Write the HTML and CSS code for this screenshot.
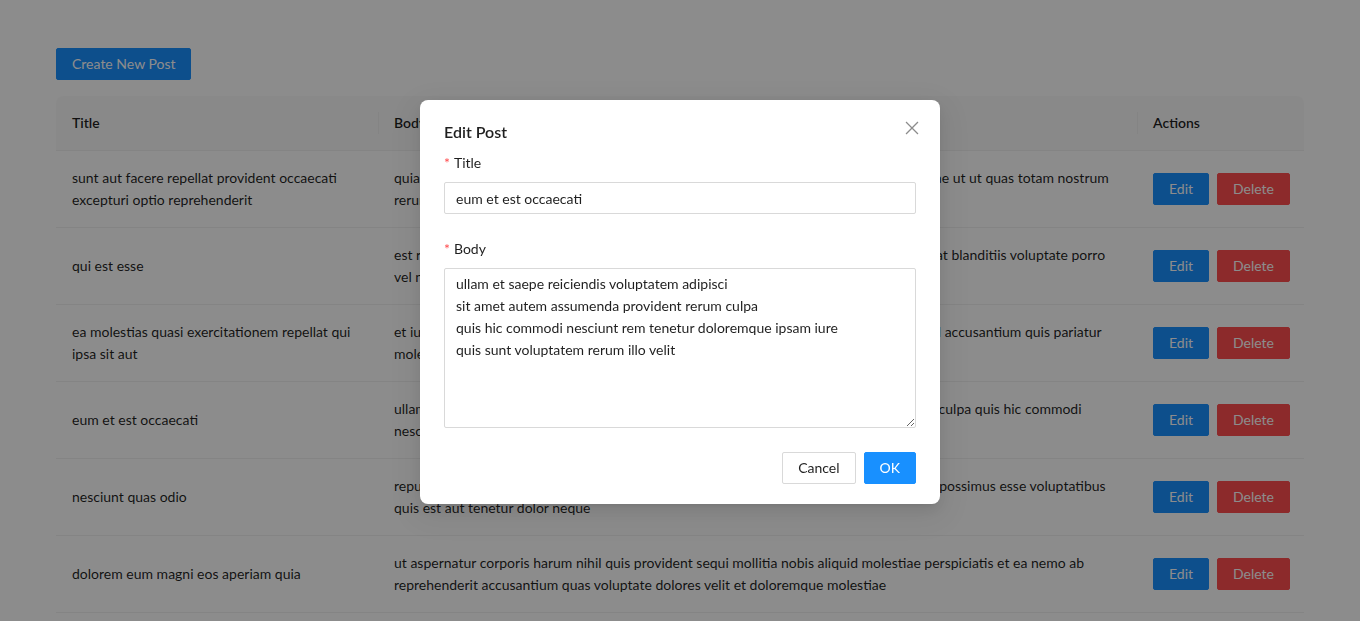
FILE: index.html
```html
<!DOCTYPE html>
<html lang="en">
<head>
<meta charset="utf-8">
<title>Posts</title>
<link rel="stylesheet" href="styles.css">
</head>
<body>
<div class="page">
  <button class="btn btn-primary create-btn">Create New Post</button>
  <table class="posts">
    <colgroup>
      <col class="col-title">
      <col class="col-body">
      <col class="col-actions">
    </colgroup>
    <thead>
      <tr><th>Title</th><th>Body</th><th>Actions</th></tr>
    </thead>
    <tbody>
      <tr>
        <td>sunt aut facere repellat provident occaecati excepturi optio reprehenderit</td>
        <td>quia et suscipit suscipit recusandae consequuntur expedita et cum reprehenderit molestiae ut ut quas totam nostrum rerum est autem sunt rem eveniet architecto</td>
        <td><div class="actions"><button class="btn btn-primary">Edit</button><button class="btn btn-danger">Delete</button></div></td>
      </tr>
      <tr>
        <td>qui est esse</td>
        <td>est rerum tempore vitae sequi sint nihil reprehenderit dolor beatae ea dolores neque fugiat blanditiis voluptate porro vel nihil molestiae ut reiciendis qui aperiam non debitis possimus qui neque nisi nulla</td>
        <td><div class="actions"><button class="btn btn-primary">Edit</button><button class="btn btn-danger">Delete</button></div></td>
      </tr>
      <tr>
        <td>ea molestias quasi exercitationem repellat qui ipsa sit aut</td>
        <td>et iusto sed quo iure voluptatem occaecati omnis eligendi aut ad voluptatem doloribus vel accusantium quis pariatur molestiae porro eius odio et labore et velit aut</td>
        <td><div class="actions"><button class="btn btn-primary">Edit</button><button class="btn btn-danger">Delete</button></div></td>
      </tr>
      <tr>
        <td>eum et est occaecati</td>
        <td>ullam et saepe reiciendis voluptatem adipisci sit amet autem assumenda provident rerum culpa quis hic commodi nesciunt rem tenetur doloremque ipsam iure quis sunt voluptatem rerum illo velit</td>
        <td><div class="actions"><button class="btn btn-primary">Edit</button><button class="btn btn-danger">Delete</button></div></td>
      </tr>
      <tr>
        <td>nesciunt quas odio</td>
        <td>repudiandae veniam quaerat sunt sed alias aut fugiat sit autem sed est voluptatem omnis possimus esse voluptatibus quis est aut tenetur dolor neque</td>
        <td><div class="actions"><button class="btn btn-primary">Edit</button><button class="btn btn-danger">Delete</button></div></td>
      </tr>
      <tr>
        <td>dolorem eum magni eos aperiam quia</td>
        <td>ut aspernatur corporis harum nihil quis provident sequi mollitia nobis aliquid molestiae perspiciatis et ea nemo ab reprehenderit accusantium quas voluptate dolores velit et doloremque molestiae</td>
        <td><div class="actions"><button class="btn btn-primary">Edit</button><button class="btn btn-danger">Delete</button></div></td>
      </tr>
    </tbody>
  </table>
</div>

<div class="mask"></div>
<div class="modal-wrap">
  <div class="modal">
    <button class="modal-close" aria-label="Close">
      <svg viewBox="0 0 16 16" width="16" height="16"><path d="M2.5 2.5 L13.5 13.5 M13.5 2.5 L2.5 13.5" stroke="currentColor" stroke-width="1.3" fill="none" stroke-linecap="square"/></svg>
    </button>
    <div class="modal-title">Edit Post</div>
    <form class="form">
      <div class="form-item">
        <label class="label"><span class="req">*</span><span>Title</span></label>
        <input class="input" type="text" value="eum et est occaecati">
      </div>
      <div class="form-item">
        <label class="label"><span class="req">*</span><span>Body</span></label>
        <textarea class="input textarea">ullam et saepe reiciendis voluptatem adipisci
sit amet autem assumenda provident rerum culpa
quis hic commodi nesciunt rem tenetur doloremque ipsam iure
quis sunt voluptatem rerum illo velit</textarea>
      </div>
    </form>
    <div class="modal-footer">
      <button class="btn btn-default">Cancel</button>
      <button class="btn btn-primary">OK</button>
    </div>
  </div>
</div>
</body>
</html>
```

FILE: styles.css
```css
* { box-sizing: border-box; }

html, body {
  margin: 0;
  padding: 0;
  background: #fff;
  overflow: hidden;
}

body {
  font-family: Lato, "Noto Sans", sans-serif;
  font-size: 14px;
  line-height: 22px;
  color: rgba(0, 0, 0, 0.88);
}

.page {
  padding: 48px 56px;
}

.btn {
  font-family: inherit;
  font-size: 14px;
  line-height: 22px;
  height: 32px;
  padding: 4px 15px;
  border: 1px solid transparent;
  border-radius: 2px;
  cursor: pointer;
  white-space: nowrap;
}

.btn-primary {
  background: #1890ff;
  border-color: #1890ff;
  color: #fff;
}

.btn-danger {
  background: #ff4d4f;
  border-color: #ff4d4f;
  color: #fff;
}

.btn-default {
  background: #fff;
  border-color: #d9d9d9;
  color: rgba(0, 0, 0, 0.88);
}

.create-btn {
  display: block;
  margin-bottom: 16px;
}

.posts {
  width: 1248px;
  table-layout: fixed;
  border-collapse: separate;
  border-spacing: 0;
}

.col-title { width: 322px; }
.col-body { width: 759px; }
.col-actions { width: 167px; }

.posts th {
  position: relative;
  background: #fafafa;
  font-weight: 600;
  text-align: left;
  padding: 16px;
  border-bottom: 1px solid #f0f0f0;
}

.posts th:first-child { border-top-left-radius: 8px; }
.posts th:last-child { border-top-right-radius: 8px; }

.posts th + th::before {
  content: "";
  position: absolute;
  left: 0;
  top: 50%;
  width: 1px;
  height: 22px;
  margin-top: -11px;
  background: #f0f0f0;
}

.posts td {
  padding: 16px;
  border-bottom: 1px solid #f0f0f0;
  vertical-align: middle;
}

.actions {
  display: flex;
  gap: 8px;
}

.mask {
  position: fixed;
  inset: 0;
  background: rgba(0, 0, 0, 0.45);
}

.modal-wrap {
  position: fixed;
  inset: 0;
  display: flex;
  justify-content: center;
  align-items: flex-start;
  padding-top: 100px;
}

.modal {
  position: relative;
  width: 520px;
  background: #fff;
  border-radius: 8px;
  padding: 20px 24px;
  box-shadow: 0 6px 16px 0 rgba(0, 0, 0, 0.08), 0 3px 6px -4px rgba(0, 0, 0, 0.12), 0 9px 28px 8px rgba(0, 0, 0, 0.05);
}

.modal-close {
  position: absolute;
  top: 17px;
  right: 17px;
  width: 22px;
  height: 22px;
  padding: 0;
  border: 0;
  background: transparent;
  color: rgba(0, 0, 0, 0.45);
  display: flex;
  align-items: center;
  justify-content: center;
}

.modal-title {
  font-size: 16px;
  font-weight: 600;
  line-height: 24px;
  margin-bottom: 8px;
}

.form-item {
  margin-bottom: 24px;
}

.label {
  display: flex;
  align-items: center;
  gap: 4px;
  padding-bottom: 8px;
  line-height: 22px;
}

.req {
  color: #ff4d4f;
  font-size: 14px;
}

.input {
  display: block;
  width: 100%;
  height: 32px;
  padding: 4px 11px;
  font-family: inherit;
  font-size: 14px;
  line-height: 22px;
  color: rgba(0, 0, 0, 0.88);
  background: #fff;
  border: 1px solid #d9d9d9;
  border-radius: 2px;
  outline: none;
}

.textarea {
  height: 160px;
  resize: vertical;
}

.modal-footer {
  display: flex;
  justify-content: flex-end;
  gap: 8px;
}
```
